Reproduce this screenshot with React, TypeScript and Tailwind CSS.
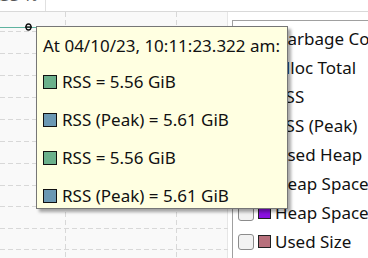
import React from "react";

const gridRows = [31, 53, 75, 97, 119, 141, 163, 185, 206, 228, 249];
const gridCols = [65, 176];

const legend = [
  { label: "Garbage Collections", color: "#e8a33c" },
  { label: "Alloc Total", color: "#4f7fc4" },
  { label: "RSS", color: "#6bb08c" },
  { label: "RSS (Peak)", color: "#6b98b3" },
  { label: "Used Heap", color: "#c4a04a" },
  { label: "Heap Space", color: "#3c6ec4" },
  { label: "Heap Space", color: "#8a10e0" },
  { label: "Used Size", color: "#b8707c" },
];

const rows = [
  { label: "RSS = 5.56 GiB", color: "#6bb08c" },
  { label: "RSS (Peak) = 5.61 GiB", color: "#6b98b3" },
  { label: "RSS = 5.56 GiB", color: "#6bb08c" },
  { label: "RSS (Peak) = 5.61 GiB", color: "#6b98b3" },
];

const App: React.FC = () => {
  return (
    <div
      className="relative w-[368px] h-[258px] overflow-hidden bg-white text-black"
      style={{ fontFamily: '"Noto Sans", "Open Sans", sans-serif' }}
    >
      <div className="flex h-[12px] border-b border-[#d9d9d9]">
        <div className="w-[46px] h-[11px] overflow-hidden border-r border-[#e0e0e0]">
          <div className="-mt-[14px] -ml-[10px] text-[17px] leading-[17px] text-[#555] whitespace-nowrap">RSS %</div>
        </div>
        <div className="flex-1" />
      </div>
      <div className="flex h-[246px]">
        <div className="relative w-[228px] shrink-0 h-full bg-[#f9f9f9] border-r border-[#e6e6e6]">
          <svg width="228" height="246" className="absolute left-0 top-0">
            {gridRows.map((y) => (
              <line key={y} x1="0" x2="228" y1={y - 12 + 0.5} y2={y - 12 + 0.5} stroke="#d8d8d8" strokeDasharray="5 3" />
            ))}
            {gridCols.map((x) => (
              <line key={x} x1={x + 0.5} x2={x + 0.5} y1="0" y2="246" stroke="#d8d8d8" strokeDasharray="5 3" />
            ))}
            <line x1="0" x2="40" y1="15.5" y2="15.5" stroke="#5fb3a0" strokeWidth="1" />
            <ellipse cx="28.5" cy="15" rx="2.5" ry="3" fill="none" stroke="#111" strokeWidth="1.3" />
            <line x1="25" x2="32" y1="15" y2="15" stroke="#111" strokeWidth="1.3" />
          </svg>
        </div>
        <div className="ml-[4px] mt-[8px] flex-1 min-w-0 overflow-hidden border-l border-t border-[#a0a0a0] bg-white pt-[3px] pl-[5px]">
          {legend.map((item, i) => (
            <div key={i} className="flex items-center h-[29px] gap-[4px] whitespace-nowrap">
              <div className="w-[16px] h-[16px] rounded-[3px] border border-[#8c8c8c] bg-[#f2f2f2] shrink-0" />
              <div className="w-[13px] h-[13px] border border-[#222] shrink-0" style={{ backgroundColor: item.color }} />
              <span className="text-[17px] leading-[20px] text-[#111]">{item.label}</span>
            </div>
          ))}
        </div>
      </div>

      <div className="absolute left-[36px] top-[26px] w-[252px] h-[183px] bg-[#ffffe1] border border-[#767676] shadow-[3px_3px_3px_rgba(0,0,0,0.35)] pl-[6px] pt-[7px]">
        <div className="text-[17px] leading-[23px] text-[#111] whitespace-nowrap">At 04/10/23, 10:11:23.322 am:</div>
        <div className="mt-[14px] flex flex-col gap-[16px]">
          {rows.map((r, i) => (
            <div key={i} className="flex items-center h-[22px] gap-[5px] whitespace-nowrap">
              <div className="w-[14px] h-[14px] border border-[#111] shrink-0" style={{ backgroundColor: r.color }} />
              <span className="text-[17px] leading-[22px] text-[#111]">{r.label}</span>
            </div>
          ))}
        </div>
      </div>
    </div>
  );
};

export default App;
